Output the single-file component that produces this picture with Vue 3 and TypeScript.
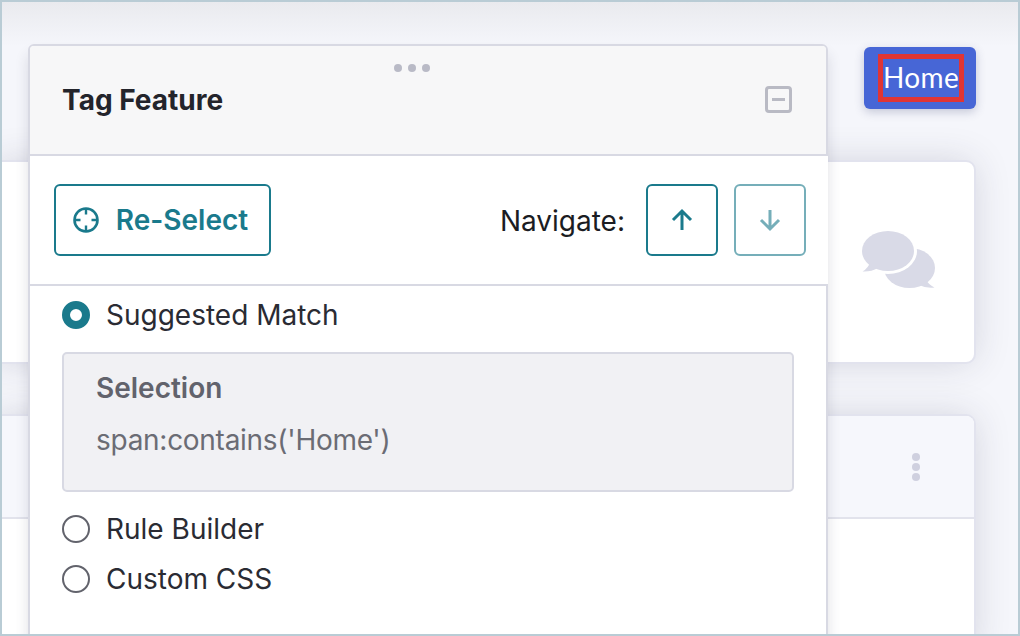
<script setup lang="ts">
const modes = [
  { label: 'Rule Builder' },
  { label: 'Custom CSS' },
]
</script>

<template>
  <div class="frame">
    <div class="page">
      <div class="top-row">
        <button class="home-btn"><span class="target">Home</span></button>
      </div>
      <section class="card card-one">
        <svg class="chat" width="73" height="58" viewBox="0 0 73 58" aria-hidden="true">
          <ellipse class="chat-fill" cx="47.500" cy="37" rx="25.500" ry="20" />
          <path class="chat-fill" d="M64 49Q67 54 72.500 56.500Q64 57.500 57 54z" />
          <ellipse class="chat-gap" cx="26" cy="20" rx="29" ry="23" />
          <ellipse class="chat-fill" cx="26" cy="20" rx="26" ry="20" />
          <path class="chat-fill" d="M8 31Q6.500 37 .5 40.500Q9 41 16 37z" />
        </svg>
      </section>
      <section class="card card-two">
        <header class="card-head">
          <div class="kebab"><i></i><i></i><i></i></div>
        </header>
      </section>
    </div>

    <aside class="dialog">
      <div class="grip"><i></i><i></i><i></i></div>
      <header class="dialog-head">
        <h2>Tag Feature</h2>
        <span class="collapse"><b></b></span>
      </header>

      <div class="toolbar">
        <button class="btn reselect">
          <svg width="26" height="26" viewBox="0 0 26 26" aria-hidden="true">
            <circle cx="13" cy="13" r="11.500" fill="none" stroke="currentColor" stroke-width="2.600" />
            <path d="M13 2v5.500M13 18.500V24M2 13h5.500M18.500 13H24" fill="none" stroke="currentColor" stroke-width="2.400" />
          </svg>
          Re-Select
        </button>
        <div class="nav">
          <span class="nav-label">Navigate:</span>
          <button class="btn square">
            <svg width="24" height="24" viewBox="0 0 24 24" aria-hidden="true">
              <path d="M12 22V4M3 12l9-9 9 9" fill="none" stroke="currentColor" stroke-width="3" />
            </svg>
          </button>
          <button class="btn square dim">
            <svg width="24" height="24" viewBox="0 0 24 24" aria-hidden="true">
              <path d="M12 2v18M3 12l9 9 9-9" fill="none" stroke="currentColor" stroke-width="3" />
            </svg>
          </button>
        </div>
      </div>

      <div class="dialog-body">
        <label class="radio-row"><span class="radio on"></span>Suggested Match</label>
        <div class="selection">
          <div class="sel-title">Selection</div>
          <div class="sel-value">span:contains('Home')</div>
        </div>
        <label v-for="m in modes" :key="m.label" class="radio-row"><span class="radio"></span>{{ m.label }}</label>
      </div>
    </aside>
  </div>
</template>

<style scoped>
.frame {
  position: relative;
  width: 1020px;
  height: 636px;
  box-sizing: border-box;
  border: 2px solid #b9ccd5;
  background: linear-gradient(#e9eaee 0, #f5f6fb 44px);
  overflow: hidden;
  font-family: Inter, "Liberation Sans", sans-serif;
}
.page {
  position: relative;
  z-index: 1;
  margin-left: -10px;
  margin-right: 42px;
  padding-top: 45px;
}
.top-row {
  display: flex;
  justify-content: flex-end;
  margin-bottom: 51px;
}
.home-btn {
  display: flex;
  align-items: center;
  width: 112px;
  height: 62px;
  padding: 0 0 0 14px;
  box-sizing: border-box;
  border: 0;
  border-radius: 6px;
  background: #4766d6;
  box-shadow: 0 3px 10px rgba(50, 60, 110, 0.25);
}
.target {
  display: block;
  box-sizing: border-box;
  width: 86px;
  height: 48px;
  border: 5px solid #e03535;
  color: #fff;
  font-family: Lato, "Open Sans", sans-serif;
  font-size: 28px;
  line-height: 36px;
  text-align: center;
  white-space: nowrap;
  letter-spacing: 0.4px;
}
.card {
  position: relative;
  box-sizing: border-box;
  background: #fff;
  border: 2px solid #e2e3ee;
  border-radius: 10px;
}
.card::before {
  content: "";
  position: absolute;
  inset: 0;
  z-index: -1;
  border-radius: 10px;
  box-shadow: 0 0 36px rgba(40, 44, 70, 0.17);
}
.card-one {
  height: 204px;
  margin-bottom: 50px;
  display: flex;
  justify-content: flex-end;
  padding: 69px 39px 0 0;
}
.chat-fill { fill: #d9dae7; }
.chat-gap { fill: #fff; }
.chat { display: block; }
.card-two {
  height: 240px;
  border-bottom: 0;
  border-radius: 10px 10px 0 0;
}
.card-head {
  height: 103px;
  box-sizing: border-box;
  background: #f6f7fc;
  border-bottom: 2px solid #e2e3ec;
  border-radius: 8px 8px 0 0;
  display: flex;
  justify-content: flex-end;
  align-items: center;
  padding-right: 54px;
}
.kebab { display: flex; flex-direction: column; gap: 2px; }
.kebab i { display: block; width: 8px; height: 8px; border-radius: 50%; background: #cfd0df; }

.dialog {
  position: absolute;
  left: 26px;
  top: 42px;
  z-index: 2;
  width: 800px;
  height: 700px;
  box-sizing: border-box;
  background: #fff;
  border: 2px solid #d8d9e3;
  border-radius: 6px 6px 0 0;
  box-shadow: 0 10px 14px rgba(40, 44, 70, 0.14);
}
.grip {
  position: absolute;
  left: 364px;
  top: 18px;
  display: flex;
  gap: 6px;
}
.grip i { display: block; width: 8px; height: 8px; border-radius: 50%; background: #b9bac6; }
.dialog-head {
  height: 110px;
  box-sizing: border-box;
  background: #f7f7f8;
  border-bottom: 2px solid #d8d9e3;
  border-radius: 4px 4px 0 0;
  display: flex;
  align-items: center;
  justify-content: space-between;
  padding: 0 34px 0 32px;
}
.dialog-head h2 {
  margin: 0;
  font-size: 28px;
  font-weight: 700;
  color: #23242b;
}
.collapse {
  width: 27px;
  height: 27px;
  box-sizing: border-box;
  border: 3px solid #b9bac4;
  border-radius: 4px;
  display: flex;
  align-items: center;
  justify-content: center;
  margin-top: -1px;
}
.collapse b { display: block; width: 13px; height: 3px; background: #b9bac4; }
.toolbar {
  height: 130px;
  box-sizing: border-box;
  background: #fff;
  border-bottom: 2px solid #d8d9e3;
  margin-right: -2px;
  padding: 28px 22px 0 24px;
  display: flex;
  justify-content: space-between;
  align-items: flex-start;
  position: relative;
}
.btn {
  height: 72px;
  box-sizing: border-box;
  border: 2px solid #1a7a8c;
  border-radius: 6px;
  background: #fff;
  color: #1a7a8c;
  font-family: inherit;
  padding: 0;
  display: flex;
  align-items: center;
  justify-content: center;
}
.reselect {
  width: 217px;
  gap: 17px;
  padding-right: 4px;
  font-size: 28px;
  font-weight: 600;
}
.nav { display: flex; align-items: center; gap: 16px; }
.nav-label { font-size: 28px; color: #1b1c22; margin-right: 5px; padding-top: 1px; }
.square { width: 72px; }
.dim { opacity: 0.6; }
.dialog-body { padding: 4px 32px 0; }
.radio-row {
  display: flex;
  align-items: center;
  gap: 16px;
  height: 50px;
  font-size: 28px;
  color: #2a2b33;
}
.radio {
  width: 28px;
  height: 28px;
  box-sizing: border-box;
  border: 2px solid #62636c;
  border-radius: 50%;
  background: #fff;
}
.radio.on { border: 8.500px solid #1a7a8c; }
.selection {
  box-sizing: border-box;
  height: 140px;
  margin: 12px 0;
  padding: 16px 32px 0;
  background: #f1f1f4;
  border: 2px solid #d8d9e3;
  border-radius: 5px;
  font-size: 28px;
}
.sel-title { font-weight: 600; color: #62636c; line-height: 36px; }
.sel-value { color: #6b6c74; line-height: 36px; margin-top: 16px; letter-spacing: -0.28px; }
</style>
